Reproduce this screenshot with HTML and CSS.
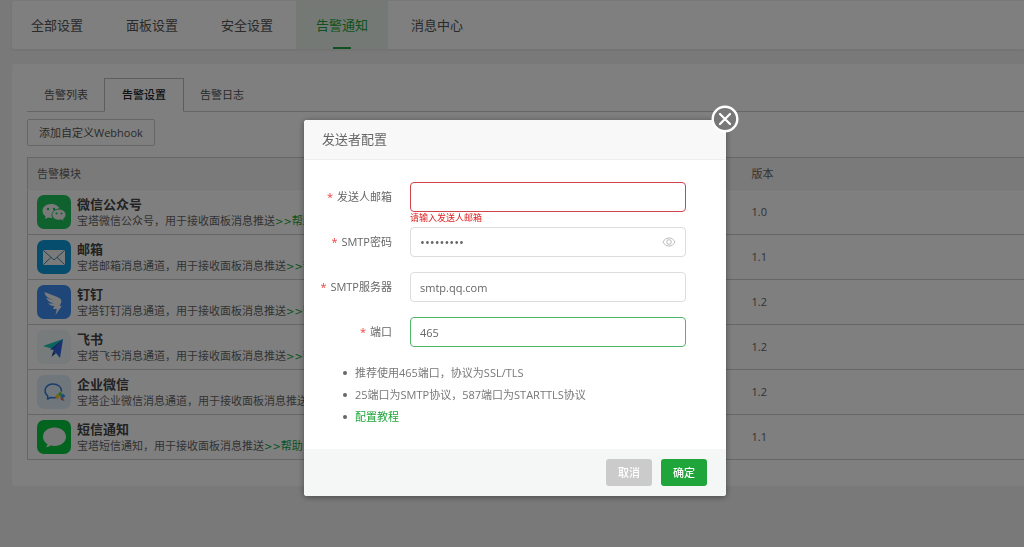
FILE: index.html
```html
<!DOCTYPE html>
<html lang="zh-CN">
<head>
<meta charset="utf-8">
<title>告警通知</title>
<link rel="stylesheet" href="styles.css">
</head>
<body>
<div class="page">
  <nav class="main-nav">
    <ul class="main-nav-list">
      <li><a href="#">全部设置</a></li>
      <li><a href="#">面板设置</a></li>
      <li><a href="#">安全设置</a></li>
      <li><a class="active" href="#">告警通知</a></li>
      <li><a href="#">消息中心</a></li>
    </ul>
  </nav>
  <main class="panel">
    <div class="tabs">
      <button class="tab" type="button">告警列表</button>
      <button class="tab active" type="button">告警设置</button>
      <button class="tab" type="button">告警日志</button>
    </div>
    <button class="add-button" type="button">添加自定义Webhook</button>
    <table class="modules">
      <colgroup><col class="col-module"><col></colgroup>
      <thead><tr><th>告警模块</th><th>版本</th></tr></thead>
      <tbody>
        <tr>
          <td><div class="module">
            <svg class="module-icon" viewBox="0 0 34 34"><rect width="34" height="34" rx="7" fill="#1fc45a"/><path d="M14 9c-5 0-8.500 3-8.500 7 0 2.200 1.200 4 3 5.300L8 24l3-1.500c1 .3 2 .4 3 .4h1c-1.500-5.500 2.500-9.500 7.500-9.400C21.500 10.800 18 9 14 9z" fill="#f4f4f4"/><path d="M22 14.200c-4 0-7 2.500-7 5.500s3 5.400 7 5.400c.9 0 1.700-.1 2.400-.3l2.600 1.400-.6-2.300c1.500-1 2.400-2.500 2.400-4.200 0-3-3-5.500-6.800-5.500z" fill="#f4f4f4" stroke="#1fc45a" stroke-width=".7"/><g fill="#1fc45a"><circle cx="11" cy="14" r="1.200"/><circle cx="17" cy="14" r="1.200"/><circle cx="19.500" cy="18.500" r="1"/><circle cx="24.500" cy="18.500" r="1"/></g></svg>
            <div><h3>微信公众号</h3><p>宝塔微信公众号，用于接收面板消息推送<a href="#"><span class="arrows">&gt;&gt;</span>帮助</a></p></div></div></td>
          <td>1.0</td>
        </tr>
        <tr>
          <td><div class="module">
            <svg class="module-icon" viewBox="0 0 34 34"><rect width="34" height="34" rx="7" fill="#0c9adb"/><rect x="6" y="10" width="22" height="15" rx="1" fill="#f4f4f4"/><path d="M6.500 10.500L17 20l10.500-9.500M6.500 24.500l7.500-7.200M27.500 24.500L20 17.300" fill="none" stroke="#3c86ab" stroke-width="1"/></svg>
            <div><h3>邮箱</h3><p>宝塔邮箱消息通道，用于接收面板消息推送<a href="#"><span class="arrows">&gt;&gt;</span>帮助</a></p></div></div></td>
          <td>1.1</td>
        </tr>
        <tr>
          <td><div class="module">
            <svg class="module-icon" viewBox="0 0 34 34"><rect width="34" height="34" rx="7" fill="#3d8df0"/><path d="M7.500 7l12.800 5c3 1.200 4.500 2.800 4 5l-1.500 4h2L18.500 30l1.300-6H16l1.500-3.200c-3 .4-5-.7-6.300-2.800 2 .6 3.500.6 5.200.3-3.400-.8-6-2.200-7-5.500 2.500 1.200 4.500 1.800 7 2C11.500 13.500 8 11.500 7.500 7z" fill="#f6f6f6"/></svg>
            <div><h3>钉钉</h3><p>宝塔钉钉消息通道，用于接收面板消息推送<a href="#"><span class="arrows">&gt;&gt;</span>帮助</a></p></div></div></td>
          <td>1.2</td>
        </tr>
        <tr>
          <td><div class="module">
            <svg class="module-icon" viewBox="0 0 34 34"><rect width="34" height="34" rx="7" fill="#eff7f8"/><path d="M6 16L26 9 16 19z" fill="#18c8b6"/><path d="M13 19.500L26 9l-8 11z" fill="#2459c6"/><path d="M26 9l-3 19-4-5-3-1 1-3z" fill="#2f64df"/><path d="M16 22l3 1-4.500 4z" fill="#163f9c"/></svg>
            <div><h3>飞书</h3><p>宝塔飞书消息通道，用于接收面板消息推送<a href="#"><span class="arrows">&gt;&gt;</span>帮助</a></p></div></div></td>
          <td>1.2</td>
        </tr>
        <tr>
          <td><div class="module">
            <svg class="module-icon" viewBox="0 0 34 34"><rect width="34" height="34" rx="7" fill="#e0eef9"/><path d="M19 22.500c-1.500.4-3.500.4-5 0L10.500 24l.3-3C5.500 16.500 8.500 9 16 9c5 0 8.500 3 8.500 7" fill="none" stroke="#3478d4" stroke-width="1.500" stroke-linecap="round" stroke-linejoin="round"/><path d="M23.500 16.500l2 3-2 2-3-2z" fill="#6cca42"/><path d="M20 19l2.500 2.500-2 3-2.500-2.500z" fill="#f2c52c"/><path d="M23 22l3 1 1.500 3-3.500-1z" fill="#e86a4a"/><path d="M25.500 18.500l3 2.500-3 2.500-2-2z" fill="#349be8"/></svg>
            <div><h3>企业微信</h3><p>宝塔企业微信消息通道，用于接收面板消息推送<a href="#"><span class="arrows">&gt;&gt;</span>帮助</a></p></div></div></td>
          <td>1.2</td>
        </tr>
        <tr>
          <td><div class="module">
            <svg class="module-icon" viewBox="0 0 34 34"><rect width="34" height="34" rx="7" fill="#06c83f"/><path d="M17.500 7.500C11 7.500 6 11.500 6 16.800c0 3.200 1.700 5.800 4.500 7.400-.2 1.400-1 2.300-2 3 2 0 3.600-.5 5-1.600 1.300.3 2.600.5 4 .5C24 26.100 29 22 29 16.800S24 7.500 17.500 7.500z" fill="#f4f4f4"/></svg>
            <div><h3>短信通知</h3><p>宝塔短信通知，用于接收面板消息推送<a href="#"><span class="arrows">&gt;&gt;</span>帮助</a></p></div></div></td>
          <td>1.1</td>
        </tr>
      </tbody>
    </table>
  </main>
</div>

<div class="overlay">
  <form class="dialog" role="dialog" aria-labelledby="dialog-title">
    <button class="close" type="button" aria-label="关闭">
      <svg viewBox="0 0 28 28"><circle cx="14" cy="14" r="12.300" fill="#777" stroke="#fff" stroke-width="2.400"/><path d="M9 9l10 10M19 9L9 19" stroke="#fff" stroke-width="2.200" stroke-linecap="round"/></svg>
    </button>
    <h2 class="dialog-title" id="dialog-title">发送者配置</h2>
    <div class="dialog-body">
      <div class="field">
        <label for="sender"><span class="required">*</span> 发送人邮箱</label>
        <div class="control"><input class="invalid" id="sender" type="text" aria-describedby="sender-error"><p class="error" id="sender-error">请输入发送人邮箱</p></div>
      </div>
      <div class="field">
        <label for="password"><span class="required">*</span> SMTP密码</label>
        <div class="control"><input class="password" id="password" type="password" value="smtp12345">
          <button class="reveal" type="button" aria-label="显示密码"><svg viewBox="0 0 14 10"><path d="M1 5c1.200-2.500 3.300-4 6-4s4.800 1.500 6 4c-1.200 2.500-3.300 4-6 4S2.200 7.500 1 5z" fill="none" stroke="#bbb"/><circle cx="7" cy="5" r="2.300" fill="none" stroke="#bbb"/></svg></button>
        </div>
      </div>
      <div class="field">
        <label for="server"><span class="required">*</span> SMTP服务器</label>
        <div class="control"><input id="server" type="text" value="smtp.qq.com"></div>
      </div>
      <div class="field">
        <label for="port"><span class="required">*</span> 端口</label>
        <div class="control"><input class="valid" id="port" type="text" value="465"></div>
      </div>
      <ul class="tips">
        <li>推荐使用465端口，协议为SSL/TLS</li>
        <li>25端口为SMTP协议，587端口为STARTTLS协议</li>
        <li><a href="#">配置教程</a></li>
      </ul>
    </div>
    <div class="dialog-footer">
      <button class="action cancel" type="button">取消</button>
      <button class="action confirm" type="button">确定</button>
    </div>
  </form>
</div>
</body>
</html>
```

FILE: styles.css
```css
* { box-sizing: border-box; }
body {
  margin: 0;
  background: #f2f2f2;
  color: #666;
  font: 11px/16px "Open Sans", "Noto Sans CJK SC", sans-serif;
  overflow: hidden;
}
button, input { font: inherit; color: inherit; }
button { cursor: pointer; }
h2, h3, p, ul { margin: 0; padding: 0; }
a { color: #20a53a; text-decoration: none; }

.page { padding: 1px 0 0 12px; }
.main-nav { background: #fff; border-radius: 3px 0 0 3px; box-shadow: 0 1px 3px rgba(0, 0, 0, .08); }
.main-nav-list { display: flex; gap: 3px; margin-left: -1px; list-style: none; }
.main-nav-list a {
  display: flex;
  justify-content: center;
  position: relative;
  padding: 0 20px;
  color: #555;
  font-size: 13px;
  line-height: 48px;
}
.main-nav-list .active { background: #e9f3eb; color: #20a53a; }
.main-nav-list .active::after {
  content: "";
  position: absolute;
  bottom: 0;
  width: 18px;
  height: 2px;
  background: #20a53a;
}

.panel { margin-top: 15px; padding: 14px 0 26px 15px; background: #fff; border-radius: 3px 0 0 3px; }
.tabs { display: flex; padding-left: 1px; border-bottom: 1px solid #ccc; }
.tab { height: 33px; padding: 0 16px; border: 0; background: none; color: #555; }
.tab.active {
  margin-bottom: -1px;
  height: 34px;
  padding: 0 17px;
  border: 1px solid #bbb;
  border-bottom-color: #fff;
  background: #fff;
  color: #222;
  font-weight: 500;
}
.add-button {
  display: block;
  height: 27px;
  margin: 7px 0 11px;
  padding: 0 11px;
  border: 1px solid #ccc;
  border-radius: 2px;
  background: #fff;
  color: #555;
}
.modules { width: 100%; border-collapse: collapse; border: 1px solid #ccc; border-right: 0; table-layout: fixed; }
.col-module { width: 715px; }
.modules th { height: 32px; padding: 0 9px; background: #f4f4f4; font-weight: 400; text-align: left; }
.modules td { height: 45px; padding: 0 9px; border-top: 1px solid #ccc; }
.modules tbody tr:first-child td { border-top-color: #eee; }
.module { display: flex; align-items: center; gap: 6px; white-space: nowrap; }
.module-icon { width: 34px; height: 34px; flex: none; }
.module h3 { color: #444; font-size: 13px; font-weight: 700; line-height: 18px; }
.module p { line-height: 16px; }
.arrows { font-family: "DejaVu Sans", sans-serif; font-size: 10px; }

.overlay {
  position: fixed;
  inset: 0;
  display: flex;
  justify-content: center;
  align-items: flex-start;
  padding: 120px 0 0 6px;
  background: rgba(0, 0, 0, .5);
}
.dialog { position: relative; width: 422px; border-radius: 3px; background: #fff; box-shadow: 0 1px 6px rgba(0, 0, 0, .4); }
.close { position: absolute; top: -15px; right: -13px; width: 28px; height: 28px; padding: 0; border: 0; border-radius: 50%; background: none; }
.close svg { display: block; }
.dialog-title {
  padding: 0 18px;
  border-bottom: 1px solid #eee;
  border-radius: 3px 3px 0 0;
  background: #f8f8f8;
  font-size: 13px;
  font-weight: 400;
  line-height: 39px;
}
.dialog-body { padding: 22px 40px 21px 0; }
.field { display: grid; grid-template-columns: 88px 1fr; column-gap: 18px; min-height: 45px; }
.field label { line-height: 30px; text-align: right; white-space: nowrap; }
.required { margin-right: 1px; color: #f04040; }
.control { position: relative; }
.control input {
  display: block;
  width: 100%;
  height: 30px;
  padding: 0 9px;
  border: 1px solid #ddd;
  border-radius: 4px;
  background: #fff;
  outline: 0;
}
.control .invalid { border-color: #d0454c; }
.control .valid { border-color: #4fb568; }
.control .password { font-size: 13px; }
.error { color: #e02020; font-size: 9px; line-height: 12px; }
.reveal { position: absolute; top: 9px; right: 10px; width: 14px; height: 12px; padding: 0; border: 0; background: none; }
.reveal svg { display: block; width: 14px; height: 10px; }
.tips { padding-left: 39px; color: #777; line-height: 22px; list-style: none; }
.tips li { display: flex; align-items: center; gap: 8px; }
.tips li::before { content: ""; width: 4px; height: 4px; border-radius: 50%; background: #666; }
.dialog-footer {
  display: flex;
  justify-content: flex-end;
  gap: 9px;
  padding: 10px 19px;
  border-radius: 0 0 3px 3px;
  background: #f5f7f7;
}
.action { height: 27px; padding: 0 12px; border: 0; border-radius: 3px; color: #fff; font-weight: 500; }
.cancel { background: #cbcbcb; }
.confirm { background: #20a53a; }
```
